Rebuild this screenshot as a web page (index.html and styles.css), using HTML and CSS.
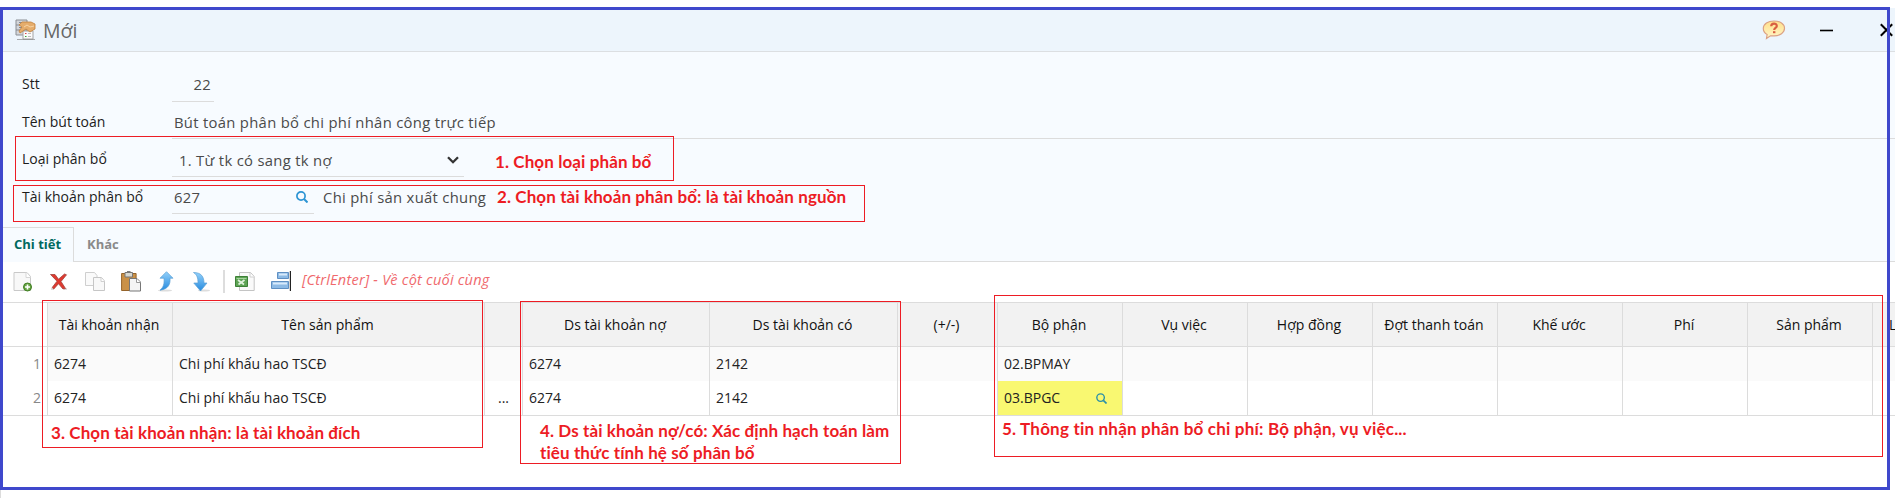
FILE: index.html
```
<!DOCTYPE html>
<html lang="vi">
<head>
<meta charset="utf-8">
<title>Mới</title>
<link rel="stylesheet" href="styles.css">
</head>
<body>
<div class="window">
  <header class="titlebar">
    <svg class="app-icon" width="22" height="22" viewBox="0 0 22 22">
      <path d="M1 1h11v15H1z" fill="#d3d6da" stroke="#8b8f95"/>
      <path d="M1 6h11M1 11h11M4 3.500h5M4 8.500h5" stroke="#858a91" fill="none"/>
      <path d="M8 12h10v8H8z" fill="#fafafa" stroke="#a4a4a4"/>
      <path d="M4 6l3-3h9l4 2v5l-5 3-4-3-6 4-1-2 3-4z" fill="#e5ad6c" stroke="#c1813d" stroke-width=".8"/>
      <path d="M9 8l3-2 3 2 4-1" fill="none" stroke="#f8d5a6"/>
      <path d="M10 14.500h1.500" stroke="#d44"/><path d="M10 17.500h1.500" stroke="#3a3"/>
      <path d="M13 14.500h3M13 17.500h3" stroke="#bbb"/>
      <path d="M2 20.500h18" stroke="#777" stroke-opacity=".6"/>
    </svg>
    <h1 class="title">Mới</h1>
    <div class="controls">
      <svg width="24" height="20" viewBox="0 0 24 20">
        <defs><linearGradient id="bubble" x1="0" y1="0" x2="0" y2="1"><stop offset="0" stop-color="#ffe08a"/><stop offset="1" stop-color="#fff6c9"/></linearGradient></defs>
        <path d="M12 1c6 0 10.500 3 10.500 7.300S18 15.800 12 15.800H8.500L4.500 18.500l.6-4C2.500 13 1.300 11 1.300 8.500 1.300 4 6 1 12 1z" fill="url(#bubble)" stroke="#dba183" stroke-width="1.200"/>
        <path d="M9.200 6.200c0-3.600 5.600-3.400 5.600-.3 0 2-2.600 2-2.600 4" fill="none" stroke="#d95f42" stroke-width="2.200"/>
        <path d="M11 11.200h2.400v2H11z" fill="#d95f42"/>
      </svg>
      <svg class="minimize" width="13" height="14" viewBox="0 0 13 14"><path d="M0 7.500h13" stroke="#000" stroke-width="1.600"/></svg>
      <svg class="close" width="13" height="14" viewBox="0 0 13 14"><path d="M.8 1.300l11.400 11.400M12.200 1.300L.8 12.700" stroke="#000" stroke-width="2"/></svg>
    </div>
  </header>

  <section class="form">
    <div class="row"><label class="label">Stt</label><div class="field field-number"><span>22</span></div></div>
    <div class="row row-short"><label class="label">Tên bút toán</label><div class="field field-wide"><span>Bút toán phân bổ chi phí nhân công trực tiếp</span></div></div>
    <div class="row"><label class="label">Loại phân bổ</label><div class="field field-select"><span>1. Từ tk có sang tk nợ</span>
      <svg width="12" height="8" viewBox="0 0 12 8"><path d="M1 1.200l5 5 5-5" fill="none" stroke="#333" stroke-width="2.300"/></svg></div></div>
    <div class="row row-short"><label class="label">Tài khoản phân bổ</label><div class="field field-lookup"><span>627</span>
      <svg width="12" height="12" viewBox="0 0 12 12"><circle cx="5" cy="5" r="4.100" fill="none" stroke="#2d94d4" stroke-width="1.700"/><path d="M8 8l3.500 3.500" stroke="#2d94d4" stroke-width="2"/></svg></div>
      <span class="description">Chi phí sản xuất chung</span></div>
  </section>

  <nav class="tabs"><a class="tab active">Chi tiết</a><a class="tab">Khác</a></nav>

  <div class="toolbar">
    <svg width="20" height="21" viewBox="0 0 20 21"><path d="M1 1.500h13l3.500 4v14H1z" fill="#f8f8f8" stroke="#c9c9c9"/><path d="M13 1.500v5h4.500" fill="#fff" stroke="#d6d6d6"/><circle cx="14.500" cy="16" r="4" fill="#68a544" stroke="#3f7e22"/><path d="M14.500 13.500v5M12 16h5" stroke="#fff" stroke-width="1.600"/></svg>
    <svg width="20" height="21" viewBox="0 0 20 21"><path d="M2 18h3M15 18h3" stroke="#bbb"/><path d="M1.500 3.500h4.500l3.500 4.700L15.500 3l2 .8-5.500 6.700 4.500 7-2.500.5-4.500-5.300-4.700 5.300-1.600-1.500 4.800-6.300z" fill="#e0392f" stroke="#a2433c" stroke-width=".8"/></svg>
    <svg width="20" height="21" viewBox="0 0 20 21"><path d="M.5 1.500h9l2.500 3v10H.5z" fill="#fafafa" stroke="#cfcfcf"/><path d="M8.500 6.500h8l3 3.500v9.500h-11z" fill="#f8f8f8" stroke="#c6c6c6"/><path d="M16 7v3.500h3.500" fill="#fff" stroke="#d0d0d0"/></svg>
    <svg width="20" height="21" viewBox="0 0 20 21"><path d="M.6 2.500h14.500v17H.6z" fill="#ca9147" stroke="#95642b"/><path d="M4 1.500h7.500V6H4z" fill="#d8d8d0" stroke="#777"/><path d="M6 .8h3.500" stroke="#777" stroke-width="1.500"/><path d="M8.500 7.500h7.500l3.500 3.500v9h-11z" fill="#f4f4f4" stroke="#777"/><path d="M15.500 8v3.500h4" fill="#fff" stroke="#999"/></svg>
    <svg width="20" height="21" viewBox="0 0 20 21"><defs><linearGradient id="arrow" x1="0" y1="0" x2="0" y2="1"><stop offset="0" stop-color="#92d0fa"/><stop offset="1" stop-color="#278bdf"/></linearGradient></defs><ellipse cx="8" cy="19.500" rx="7" ry="1" fill="#ddd"/><path d="M9.500.7l6.500 6.500h-3c.5 6-1.500 10.800-10 12 3.500-3 4.500-6.500 4-12H3z" fill="url(#arrow)" stroke="#599fd4" stroke-width=".7"/></svg>
    <svg width="20" height="21" viewBox="0 0 20 21"><ellipse cx="11" cy="19.500" rx="6" ry="1" fill="#ddd"/><path d="M.5 1.500c7.500 0 10.500 4 10.500 10.500h3l-6.500 8L.8 12H5c0-5-.8-8-4.500-10.500z" fill="url(#arrow)" stroke="#599fd4" stroke-width=".7"/></svg>
    <i class="separator"></i>
    <svg width="20" height="21" viewBox="0 0 20 21"><path d="M4.500 1.500h11l3.700 4v14H4.500z" fill="#fafafa" stroke="#c4c4c4"/><path d="M15 2v4h4" fill="#fff" stroke="#d0d0d0"/><path d="M.5 5.500h12v10H.5z" fill="#5da354" stroke="#3d8137"/><path d="M1.500 7.500h10" stroke="#a6d49e"/><path d="M3 9l6 4.500M9.500 9L3.500 13.500" stroke="#dff1dc" stroke-width="1.700"/></svg>
    <svg width="20" height="21" viewBox="0 0 20 21"><path d="M6.500 1.500h11v6h-11zM.5 10.500h17v7H.5z" fill="#8dbae5" stroke="#5e8fc3"/><path d="M8 3.500h8M2 12.500h14" stroke="#d7e9fb" stroke-width="2"/><path d="M19.400 0v20" stroke="#222" stroke-width="1.200"/></svg>
    <em class="hint">[CtrlEnter] - Về cột cuối cùng</em>
  </div>

  <div class="grid head">
    <div class="cell gutter"></div><div class="cell">Tài khoản nhận</div><div class="cell">Tên sản phẩm</div><div class="cell"></div><div class="cell">Ds tài khoản nợ</div><div class="cell">Ds tài khoản có</div><div class="cell">(+/-)</div><div class="cell">Bộ phận</div><div class="cell">Vụ việc</div><div class="cell">Hợp đồng</div><div class="cell">Đợt thanh toán</div><div class="cell">Khế ước</div><div class="cell">Phí</div><div class="cell">Sản phẩm</div><div class="cell clipped">L</div>
  </div>
  <div class="grid data odd">
    <div class="cell gutter">1</div><div class="cell">6274</div><div class="cell">Chi phí khấu hao TSCĐ</div><div class="cell"></div><div class="cell">6274</div><div class="cell">2142</div><div class="cell"></div><div class="cell">02.BPMAY</div><div class="cell"></div><div class="cell"></div><div class="cell"></div><div class="cell"></div><div class="cell"></div><div class="cell"></div><div class="cell last"></div>
  </div>
  <div class="grid data even">
    <div class="cell gutter">2</div><div class="cell">6274</div><div class="cell">Chi phí khấu hao TSCĐ</div><div class="cell more">...</div><div class="cell">6274</div><div class="cell">2142</div><div class="cell"></div><div class="cell selected"><span>03.BPGC</span>
      <svg width="11" height="11" viewBox="0 0 12 12"><circle cx="5" cy="5" r="4.100" fill="none" stroke="#2a90a8" stroke-width="1.500"/><path d="M8 8l3.500 3.500" stroke="#2a90a8" stroke-width="1.800"/></svg></div><div class="cell"></div><div class="cell"></div><div class="cell"></div><div class="cell"></div><div class="cell"></div><div class="cell"></div><div class="cell last"></div>
  </div>
</div>

<div class="frame"></div>
<div class="note note-1"><span>1. Chọn loại phân bổ</span></div>
<div class="note note-2"><span>2. Chọn tài khoản phân bổ: là tài khoản nguồn</span></div>
<div class="note note-3"><span>3. Chọn tài khoản nhận: là tài khoản đích</span></div>
<div class="note note-4"><span>4. Ds tài khoản nợ/có: Xác định hạch toán làm</span><span>tiêu thức tính hệ số phân bổ</span></div>
<div class="note note-5"><span>5. Thông tin nhận phân bổ chi phí: Bộ phận, vụ việc...</span></div>
</body>
</html>
```
FILE: styles.css
```
* { box-sizing: border-box; }
body {
  margin: 0;
  padding-top: 8px;
  height: 498px;
  overflow: hidden;
  position: relative;
  background: #fff;
  font-family: "Open Sans", "Noto Sans", sans-serif;
  font-size: 14px;
  line-height: 20px;
  white-space: nowrap;
}
svg { display: block; flex: none; }
.window { height: 490px; border-left: 1px solid #dcdcdc; overflow: hidden; }

.titlebar {
  display: flex;
  align-items: center;
  height: 44px;
  padding: 1px 2px 0 14px;
  background: #edf5fc;
  border-bottom: 1px solid #dcdfe2;
}
.app-icon { margin-top: -1px; }
.title { margin: 1px 0 0 6px; font-size: 19.500px; line-height: 28px; font-weight: 400; color: #666; }
.controls { display: flex; align-items: center; margin-left: auto; }
.minimize { margin-left: 34px; }
.close { margin-left: 47px; }

.form { padding: 12px 0 0 21px; height: 175px; background: #f7fbff; color: #4a4a4a; }
.row { display: flex; height: 38px; }
.row-short { height: 37px; }
.label { width: 150px; padding-top: 10px; color: #1c1c1c; }
.field, .description { font-size: 14.800px; letter-spacing: .31px; }
.field { display: flex; align-items: center; border-bottom: 1px solid #dcdcdc; padding: 3px 3px 0 2px; }
.field-number { width: 42px; justify-content: flex-end; }
.field-wide { flex: 1; }
.field-select { width: 292px; padding: 5px 5px 0 7px; justify-content: space-between; }
.field-lookup { width: 142px; padding-right: 6px; justify-content: space-between; }
.description { margin: 10px 0 0 9px; }

.tabs { display: flex; height: 35px; background: #f7fbff; font-weight: 700; font-size: 13px; color: #8a8a8a; }
.tab { padding: 7px 0 0 13px; border-bottom: 1px solid #dcdcdc; flex: 1; }
.tab.active { flex: none; width: 73px; color: #00695f; border-top: 1px solid #dcdcdc; border-right: 1px solid #dcdcdc; border-bottom: 0; padding-top: 6px; }

.toolbar { display: flex; align-items: center; height: 40px; padding: 0 0 2px 12px; gap: 16px; }
.separator { width: 2px; height: 23px; margin: 0 -6px 0 -6px; background: #ddd; }
.hint { margin: -2px 0 0 -5px; font-size: 14.500px; letter-spacing: .24px; color: #f0696d; }

.grid {
  display: grid;
  grid-template-columns: 47px 125px 312px 38px 187px 188px 100px repeat(7, 125px) 1fr;
  color: #222;
}
.cell { border-right: 1px solid #dcdcdc; display: flex; align-items: center; overflow: hidden; }
.head { height: 45px; border-top: 1px solid #dcdcdc; border-bottom: 1px solid #dcdcdc; background: #f2f2f2; color: #111; }
.head .cell { justify-content: center; padding: 0 2px 0 0; }
.data { height: 34px; }
.data .cell { padding-left: 6px; }
.odd { background: #fafafa; }
.even { height: 35px; border-bottom: 1px solid #dcdcdc; }
.cell.gutter { background: #fff; color: #888; justify-content: flex-end; padding-right: 6px; }
.head .cell.clipped { justify-content: flex-start; padding-left: 16px; border-right: 0; }
.cell.last { border-right: 0; }
.data .cell.more { padding: 0; justify-content: center; }
.data .cell.selected { background: #f9f871; justify-content: space-between; padding-right: 15px; }

.frame { position: absolute; left: 0; top: 7px; width: 1890px; height: 483px; border: 3px solid #3f48cc; }
.note {
  position: absolute;
  border: 1px solid #ed1c24;
  color: #ed1c24;
  font-family: Lato, "Open Sans", sans-serif;
  font-weight: 700;
  font-size: 17px;
  letter-spacing: .1px;
  line-height: 22px;
}
.note span { display: block; }
.note-1 { left: 15px; top: 136px; width: 659px; height: 45px; padding: 14px 0 0 479px; }
.note-2 { left: 13px; top: 185px; width: 852px; height: 37px; padding: 0 0 0 483px; }
.note-3 { left: 42px; top: 300px; width: 441px; height: 148px; padding: 121px 0 0 8px; }
.note-4 { left: 520px; top: 301px; width: 381px; height: 163px; padding: 118px 0 0 19px; }
.note-5 { left: 994px; top: 295px; width: 889px; height: 162px; padding: 122px 0 0 7px; letter-spacing: .2px; }
```
